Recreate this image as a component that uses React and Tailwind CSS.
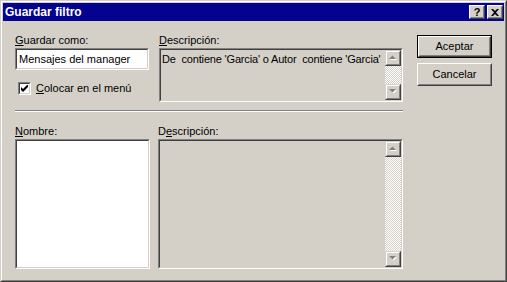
const FONT = "font-['Liberation_Sans',Arial,sans-serif]"

function Sunken({ className = '', innerClass = '', children }) {
  return (
    <div className={`border border-t-[#808080] border-l-[#808080] border-b-white border-r-white ${className}`}>
      <div className={`h-full border border-t-[#404040] border-l-[#404040] border-b-[#d4d0c8] border-r-[#d4d0c8] ${innerClass}`}>
        {children}
      </div>
    </div>
  )
}

function Raised({ className = '', innerClass = '', children }) {
  return (
    <div className={`border border-t-white border-l-white border-b-[#404040] border-r-[#404040] ${className}`}>
      <div className={`h-full border border-t-[#d4d0c8] border-l-[#d4d0c8] border-b-[#808080] border-r-[#808080] ${innerClass}`}>
        {children}
      </div>
    </div>
  )
}

function Arrow({ up }) {
  return (
    <div className="h-4 border border-t-[#d4d0c8] border-l-[#d4d0c8] border-b-[#404040] border-r-[#404040]">
      <div className="h-full border border-t-white border-l-white border-b-[#808080] border-r-[#808080] bg-[#d4d0c8] flex items-center justify-center">
        <svg width="9" height="6" viewBox="0 0 9 6">
          {up ? (
            <>
              <path d="M4 1 L8 5 L1 5 Z" fill="#ffffff" />
              <path d="M3.5 0.5 L7 4 L0 4 Z" fill="#808080" />
            </>
          ) : (
            <>
              <path d="M1 1 L8 1 L4.5 4.5 Z" fill="#ffffff" />
              <path d="M0 0 L7 0 L3.5 3.5 Z" fill="#808080" />
            </>
          )}
        </svg>
      </div>
    </div>
  )
}

function Scrollbar() {
  return (
    <div className="w-4 h-full flex flex-col">
      <Arrow up />
      <div className="flex-1 bg-[repeating-conic-gradient(#ffffff_0_25%,#d4d0c8_0_50%)] bg-[length:2px_2px]" />
      <Arrow />
    </div>
  )
}

function Button({ children, isDefault }) {
  const face = (
    <Raised className="h-full" innerClass="bg-[#d4d0c8] flex items-center justify-center text-[11px] text-black">
      {children}
    </Raised>
  )
  if (isDefault) {
    return <div className="w-[75px] h-[23px] border border-black">{face}</div>
  }
  return <div className="w-[75px] h-[23px]">{face}</div>
}

export default function App() {
  return (
    <div className={`w-[507px] h-[282px] ${FONT} text-black`}>
      <div className="h-full border border-t-[#d4d0c8] border-l-[#d4d0c8] border-b-[#404040] border-r-[#404040]">
        <div className="h-full border border-t-white border-l-white border-b-[#808080] border-r-[#808080] bg-[#d4d0c8] p-px flex flex-col">
          {/* title bar */}
          <div className="h-[18px] bg-[#03038f] flex items-center pl-[2px] pr-[1px]">
            <span className="text-white font-bold text-[12px] leading-none flex-1">Guardar filtro</span>
            <div className="flex gap-[2px]">
              <Raised className="w-4 h-[14px]" innerClass="bg-[#d4d0c8] flex items-center justify-center">
                <span className="font-bold text-[11px] leading-none text-black">?</span>
              </Raised>
              <Raised className="w-4 h-[14px]" innerClass="bg-[#d4d0c8] flex items-center justify-center">
                <svg width="8" height="7" viewBox="0 0 8 7">
                  <path d="M0 0 L2 0 L4 2 L6 0 L8 0 L5 3.5 L8 7 L6 7 L4 5 L2 7 L0 7 L3 3.5 Z" fill="#000" />
                </svg>
              </Raised>
            </div>
          </div>

          {/* body */}
          <div className="flex-1 flex pl-3">
            <div className="w-[388px] flex flex-col pt-3">
              <div className="flex">
                <div className="w-[144px] flex flex-col">
                  <div className="text-[11px] leading-[14px]"><span className="underline">G</span>uardar como:</div>
                  <Sunken className="mt-px w-[134px] h-[22px]" innerClass="bg-white flex items-center pl-[2px]">
                    <span className="text-[11px] leading-none">Mensajes del manager</span>
                  </Sunken>
                  <div className="mt-3 flex items-center pl-[3px] h-[13px]">
                    <Sunken className="w-[13px] h-[13px]" innerClass="bg-white flex items-center justify-center">
                      <svg width="7" height="7" viewBox="0 0 7 7">
                        <path d="M0 2 L0 5 L2 7 L7 2 L7 -1 L2 4 Z" fill="#000" />
                      </svg>
                    </Sunken>
                    <span className="ml-[5px] text-[11px] leading-none"><span className="underline">C</span>olocar en el menú</span>
                  </div>
                </div>
                <div className="flex flex-col">
                  <div className="text-[11px] leading-[14px]"><span className="underline">D</span>escripción:</div>
                  <Sunken className="mt-px w-[244px] h-[54px]" innerClass="flex">
                    <div className="flex-1 text-[11px] tracking-[-0.17px] leading-[14px] pl-px pt-[2px] whitespace-pre overflow-hidden">De  contiene 'Garcia' o Autor  contiene 'Garcia'</div>
                    <Scrollbar />
                  </Sunken>
                </div>
              </div>

              <div className="mt-2 h-[2px] border-t border-t-[#808080] border-b border-b-white" />

              <div className="flex mt-3">
                <div className="w-[144px] flex flex-col">
                  <div className="text-[11px] leading-[14px]"><span className="underline">N</span>ombre:</div>
                  <Sunken className="mt-px w-[135px] h-[130px]" innerClass="bg-white" />
                </div>
                <div className="flex flex-col">
                  <div className="text-[11px] leading-[14px]">D<span className="underline">e</span>scripción:</div>
                  <Sunken className="mt-px w-[245px] h-[130px]" innerClass="flex">
                    <div className="flex-1" />
                    <Scrollbar />
                  </Sunken>
                </div>
              </div>
            </div>

            <div className="ml-[14px] pt-[14px] flex flex-col gap-[5px]">
              <Button isDefault>Aceptar</Button>
              <Button>Cancelar</Button>
            </div>
          </div>
        </div>
      </div>
    </div>
  )
}
